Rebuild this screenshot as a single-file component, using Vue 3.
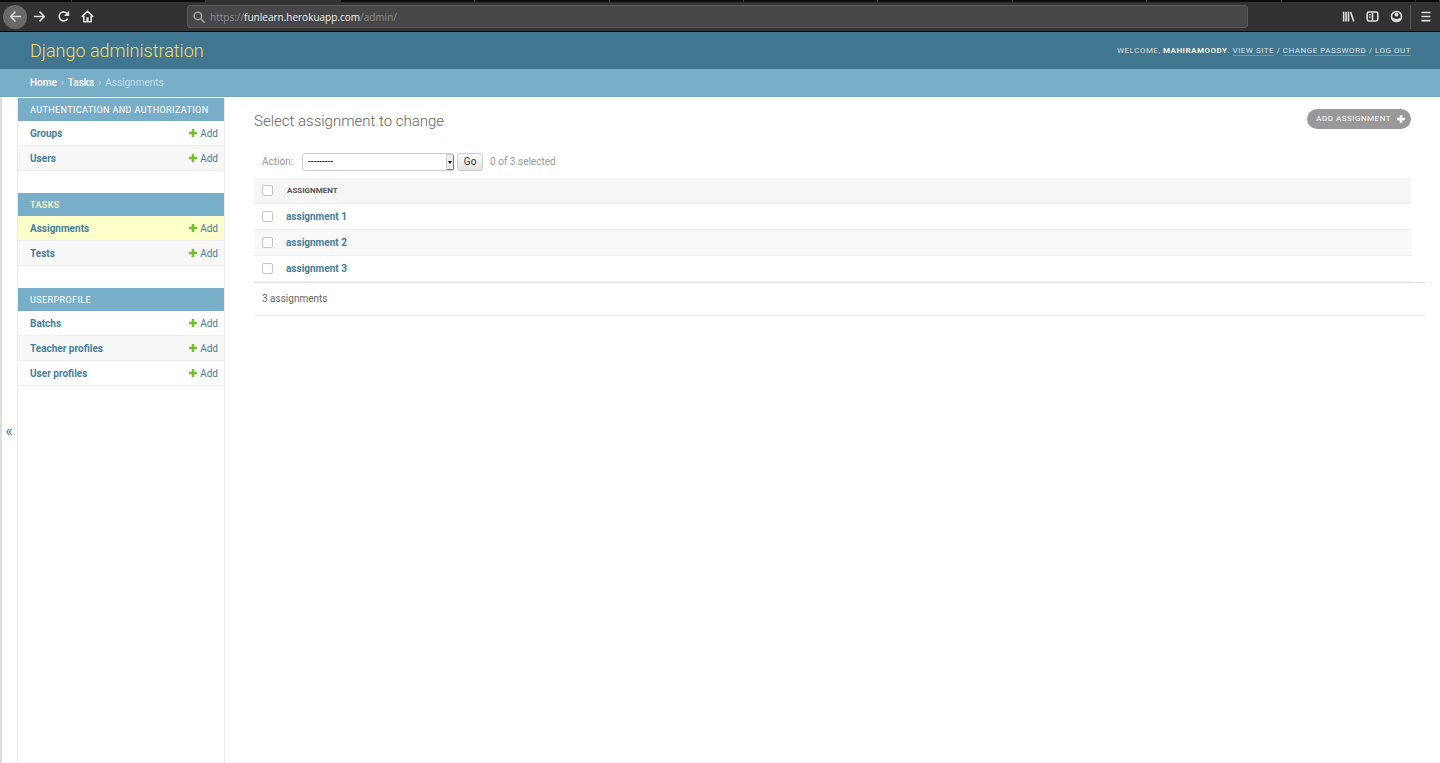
<script setup>
import { ref, computed } from 'vue'

const groups = [
  { name: 'Authentication and Authorization', items: ['Groups', 'Users'] },
  { name: 'Tasks', current: true, items: ['Assignments', 'Tests'] },
  { name: 'Userprofile', items: ['Batchs', 'Teacher profiles', 'User profiles'] }
]
const assignments = ['assignment 1', 'assignment 2', 'assignment 3']
const selected = ref([])
const allSelected = computed({
  get: () => selected.value.length === assignments.length,
  set: (on) => { selected.value = on ? [...assignments] : [] }
})
const tabs = Array.from({ length: 12 }, (_, i) => i)
</script>

<template>
  <div class="page">
    <div class="browser">
      <div class="tabs"><span v-for="t in tabs" :key="t" :class="{ active: t === 2 }"></span></div>
      <div class="toolbar">
        <button class="tool back" aria-label="Back">
          <svg viewBox="0 0 16 16"><path d="M15 8H2M8 2L2 8l6 6" /></svg>
        </button>
        <button class="tool" aria-label="Forward">
          <svg viewBox="0 0 16 16"><path d="M1 8h13M8 2l6 6-6 6" /></svg>
        </button>
        <button class="tool" aria-label="Reload">
          <svg viewBox="0 0 16 16"><path d="M13 10.500A5.500 5.500 0 1 1 12.500 4.500" /><path class="solid" d="M15 1v6.500H8.500z" /></svg>
        </button>
        <button class="tool" aria-label="Home page">
          <svg viewBox="0 0 16 16"><path d="M1 8.500L8 1.500l7 7M3.500 7.500V14.500h9V7.500" /><path class="solid" d="M6.500 9h3v5.500h-3z" /></svg>
        </button>
        <label class="address">
          <svg viewBox="0 0 16 16"><circle cx="6.500" cy="6.500" r="5" /><path d="M10 10l5.500 5.500" /></svg>
          <span class="url">https://<b>funlearn.herokuapp.com</b>/admin/</span>
        </label>
        <div class="tools">
          <button class="tool" aria-label="Library">
            <svg viewBox="0 0 16 16"><path d="M2 2v12M5 2v12M8 2v12M10.500 2.500l4 11.500" /></svg>
          </button>
          <button class="tool" aria-label="Sidebars">
            <svg viewBox="0 0 16 16"><rect x="1.500" y="2.500" width="13" height="11" rx="2" /><path d="M8 3v10" /><path class="thin" d="M3.500 5.500h2.500M3.500 7.500h2.500M3.500 9.500h2" /></svg>
          </button>
          <button class="tool" aria-label="Account">
            <svg viewBox="0 0 16 16"><circle cx="8" cy="8" r="6.200" /><circle class="solid" cx="8" cy="5.800" r="2.300" /><path class="solid" d="M2.500 9.500c2 0 2.500 1.500 5.500 1.500s3.500-1.500 5.500-1.500c0 3-2.500 5-5.500 5s-5.500-2-5.500-5z" /></svg>
          </button>
          <button class="tool menu" aria-label="Menu">
            <svg viewBox="0 0 16 16"><path d="M3 3h11M3 8h11M3 13h11" /></svg>
          </button>
        </div>
      </div>
    </div>

    <header class="header">
      <a class="brand" href="#">Django administration</a>
      <div class="user">
        Welcome, <strong>mahiramoody</strong>.
        <a href="#">View site</a> / <a href="#">Change password</a> / <a href="#">Log out</a>
      </div>
    </header>
    <nav class="crumbs" aria-label="Breadcrumbs">
      <a href="#">Home</a><span>›</span><a href="#">Tasks</a><span>›</span><span>Assignments</span>
    </nav>

    <div class="main">
      <button class="toggle" aria-label="Toggle navigation">«</button>
      <nav class="sidebar" aria-label="Applications">
        <table v-for="g in groups" :key="g.name">
          <caption :class="{ current: g.current }"><a href="#">{{ g.name }}</a></caption>
          <tbody>
            <tr v-for="item in g.items" :key="item" :class="{ chosen: item === 'Assignments' }">
              <th scope="row"><a href="#">{{ item }}</a></th>
              <td><a href="#"><svg viewBox="0 0 16 16"><path d="M5.500 0h5v5.500H16v5h-5.500V16h-5v-5.500H0v-5h5.500z" /></svg>Add</a></td>
            </tr>
          </tbody>
        </table>
      </nav>
      <main class="content">
        <div class="title">
          <h1>Select assignment to change</h1>
          <a class="add" href="#">Add assignment<svg viewBox="0 0 16 16"><path d="M5.500 0h5v5.500H16v5h-5.500V16h-5v-5.500H0v-5h5.500z" /></svg></a>
        </div>
        <div class="actions">
          <label for="action">Action:</label>
          <span class="select">
            <select id="action"><option>---------</option><option>Delete selected assignments</option></select>
            <i></i>
          </span>
          <button class="go">Go</button>
          <span>{{ selected.length }} of 3 selected</span>
        </div>
        <table class="results">
          <thead>
            <tr>
              <th class="check"><input v-model="allSelected" type="checkbox" aria-label="Select all"></th>
              <th scope="col">Assignment</th>
            </tr>
          </thead>
          <tbody>
            <tr v-for="a in assignments" :key="a">
              <td class="check"><input v-model="selected" type="checkbox" :value="a" :aria-label="a"></td>
              <th scope="row"><a href="#">{{ a }}</a></th>
            </tr>
          </tbody>
        </table>
        <p class="count">3 assignments</p>
      </main>
    </div>
  </div>
</template>

<style>
body { margin: 0; background: #fff; }
</style>

<style scoped>
* { box-sizing: border-box; }
.page { display: flex; flex-direction: column; min-height: 100vh; font: 10px/14px Roboto, "Liberation Sans", sans-serif; color: #666; }
a { color: #447e9b; text-decoration: none; }
button { font: inherit; border: 0; padding: 0; background: none; color: inherit; }
.browser { background: #323232; border-bottom: 1px solid #0c0c0d; }
.tabs { display: grid; grid-template-columns: 72px repeat(10, 1fr) 24px; height: 2px; background: #0c0c0d; }
.tabs span { border-right: 1px solid #38383d; }
.tabs .active { background: #323232; }
.toolbar { display: flex; align-items: center; height: 29px; padding: 0 0 0 3px; }
.tool { display: flex; align-items: center; justify-content: center; width: 24px; height: 24px; }
.tool svg { width: 13px; height: 13px; }
.toolbar svg { fill: none; stroke: #dededa; stroke-width: 2; stroke-linejoin: round; }
.toolbar svg .solid { fill: #dededa; stroke: none; }
.toolbar svg .thin { stroke-width: 1; }
.back { border-radius: 50%; background: #6b6967; }
.address { display: flex; align-items: center; gap: 5px; flex: 1; height: 23px; margin: 0 88px; padding: 0 5px; background: #474749; border: 1px solid #5a5a5c; border-radius: 3px; }
.address svg { width: 12px; height: 12px; stroke: #a3a8a8; }
.url { font: 10px/14px "Open Sans", "Noto Sans", sans-serif; color: #8c8c8e; }
.url b { font-weight: 400; color: #f0f0f1; }
.tools { display: flex; }
.menu { width: 30px; margin-left: 2px; border-left: 1px solid #59595b; }

.header { display: flex; align-items: center; justify-content: space-between; height: 37px; padding: 0 29px 0 30px; background: #417690; color: #ffc; }
.brand { font-size: 18px; line-height: 22px; font-weight: 300; color: #f5dd5d; }
.user { font-size: 8px; letter-spacing: 0.5px; text-transform: uppercase; color: #d5dfd2; }
.user strong { color: #f2f2dc; }
.user a { color: #d5e2e8; border-bottom: 1px solid #6a9cb8; }
.crumbs { display: flex; gap: 4px; height: 28px; padding: 7px 30px; background: #79aec8; color: #c4dce8; border-bottom: 1px solid #74a6bf; }
.crumbs a { color: #fff; font-weight: 500; }

.main { display: flex; flex: 1; }
.toggle { width: 17px; padding: 2px 1px 0 0; border-left: 2px solid #dbdfe0; color: #447e9b; font-size: 16px; }
.sidebar { width: 208px; border: solid #eaeaea; border-width: 0 1px; padding-top: 1px; }
table { width: 100%; border-collapse: separate; border-spacing: 0; }
.sidebar table { margin-bottom: 22px; }
caption { height: 23px; padding: 6px 12px 4px; text-align: left; font-size: 9px; line-height: 13px; letter-spacing: 0.4px; text-transform: uppercase; background: #79aec8; }
caption a { color: #fff; }
.current a { color: #ffc; font-weight: 500; }
.sidebar tr { height: 25px; }
.sidebar th, .sidebar td { padding: 2px 6px 0 12px; border-bottom: 1px solid #eee; text-align: left; }
.sidebar td { text-align: right; }
.sidebar td svg { width: 8px; height: 8px; margin-right: 3px; fill: #70bf2b; }
.sidebar tr:nth-child(even) { background: #f8f8f8; }
.sidebar .chosen { background: #ffc; }

.content { flex: 1; padding: 12px 29px 0; }
.title { display: flex; align-items: flex-start; justify-content: space-between; height: 44px; }
h1 { margin: 0; font-size: 15px; line-height: 25px; font-weight: 300; color: #5f6664; }
.add { display: flex; align-items: center; gap: 6px; height: 20px; padding: 0 6px 0 9px; border-radius: 10px; background: #999; color: #fff; font-size: 8px; letter-spacing: 0.5px; text-transform: uppercase; }
.add svg { width: 8px; height: 8px; fill: #fff; }
.actions { display: flex; align-items: center; height: 18px; padding-left: 8px; color: #999; }
.select { position: relative; width: 152px; margin: 0 3px 0 9px; }
select { display: block; appearance: none; width: 100%; height: 18px; padding: 0 5px; border: 1px solid #ccc; border-radius: 3px; background: #fff; color: #111; font: 10px/14px Roboto, sans-serif; }
.select i { position: absolute; top: 1px; right: 0; width: 8px; height: 16px; border: 1px solid #777; border-left-color: #ccc; border-top-color: #ccc; border-radius: 2px; background: #eee; pointer-events: none; }
.select i::after { content: ""; position: absolute; top: 6px; left: 1px; border: solid transparent; border-width: 3px 2px 0; border-top-color: #111; }
.go { width: 26px; height: 18px; margin-right: 7px; border: 1px solid #ccc; border-radius: 3px; background: linear-gradient(#fff, #e2e2e2); color: #333; }
.results { margin-top: 7px; }
.results tr { height: 26px; }
.results th, .results td { padding: 0 8px; text-align: left; border-bottom: 1px solid #eee; }
.results thead tr { background: #f6f6f6; }
.results thead th { font-size: 8px; color: #555; }
.results thead th:last-child { text-transform: uppercase; padding-left: 9px; }
.results .check { width: 24px; padding-right: 0; }
.results tbody tr:nth-child(even) { background: #f9f9f9; }
input { display: block; appearance: none; width: 11px; height: 11px; margin: 0; border: 1px solid #c3c6c6; border-radius: 2px; background: #fff; }
input:checked { background: #79aec8; }
.count { margin: 0 -15px 0 0; padding: 9px 8px; border: solid #eee; border-width: 1px 0; border-top-color: #dbe1e1; }
</style>
